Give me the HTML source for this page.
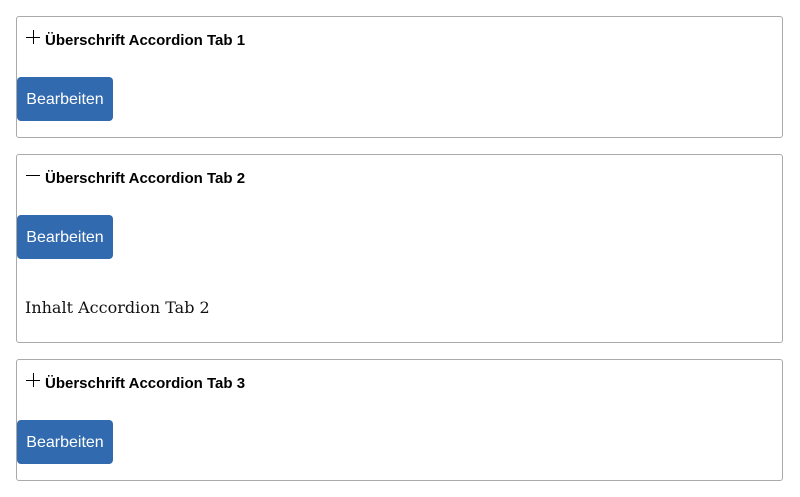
<!DOCTYPE html>
<html><head><meta charset="utf-8"><style>
body{margin:0;background:#fff;width:800px;height:497px;position:relative;overflow:hidden}
.box{position:absolute;left:16px;width:765px;border:1px solid #aaa;border-radius:3px;box-sizing:content-box}
.h{position:absolute;left:29px;font:bold 15px "Liberation Sans",sans-serif;color:#000}
.ic{position:absolute;left:26px;width:14px;height:14px}
.btn{position:absolute;left:17px;width:96px;height:44px;background:#316aae;border-radius:4px;color:#fff;font:16px "Liberation Sans",sans-serif;line-height:46px;text-align:center}
.t{position:absolute;left:25px;top:298px;font:16px "DejaVu Serif",serif;color:#111}
</style></head><body>
<div class="box" style="top:16px;height:120px"></div>
<div class="box" style="top:154px;height:187px"></div>
<div class="box" style="top:359px;height:120px"></div>

<svg class="ic" style="top:30px"><path d="M0 7.5H14M7.5 0V14" stroke="#000" stroke-width="1"/></svg>
<div class="h" style="left:45px;top:32px">Überschrift Accordion Tab 1</div>
<div class="btn" style="top:77px">Bearbeiten</div>

<svg class="ic" style="top:168px"><path d="M0 7.5H14" stroke="#000" stroke-width="1"/></svg>
<div class="h" style="left:45px;top:170px">Überschrift Accordion Tab 2</div>
<div class="btn" style="top:215px">Bearbeiten</div>
<div class="t">Inhalt Accordion Tab 2</div>

<svg class="ic" style="top:373px"><path d="M0 7.5H14M7.5 0V14" stroke="#000" stroke-width="1"/></svg>
<div class="h" style="left:45px;top:375px">Überschrift Accordion Tab 3</div>
<div class="btn" style="top:420px">Bearbeiten</div>
</body></html>
